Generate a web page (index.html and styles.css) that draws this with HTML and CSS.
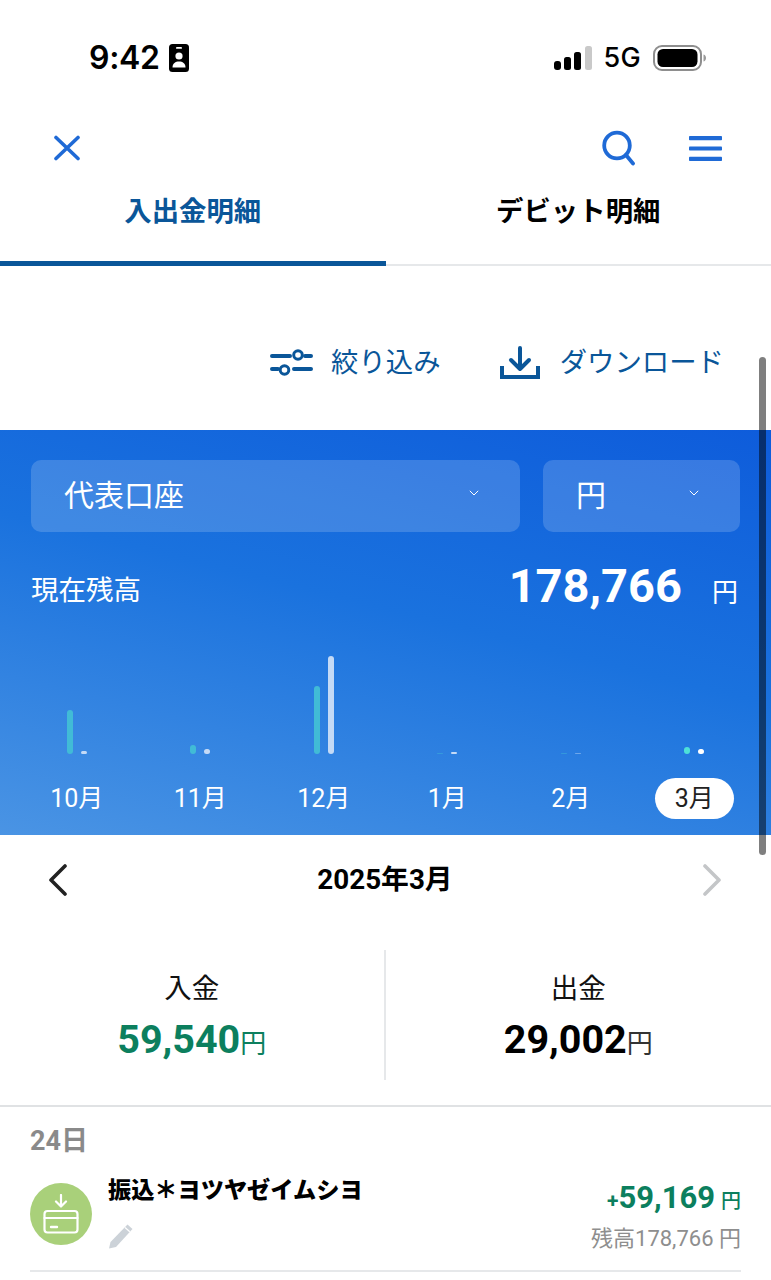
FILE: index.html
```html
<!DOCTYPE html>
<html lang="ja">
<head>
<meta charset="utf-8">
<title>入出金明細</title>
<link rel="stylesheet" href="styles.css">
</head>
<body>
<div class="page">
  <div class="status">
    <div class="status-left">
      <span class="time">9:42</span>
      <svg class="id-icon" width="22" height="30" viewBox="0 0 22 30"><rect x="1" y="1" width="20" height="28" rx="3.5" fill="#000"/><rect x="8" y="4" width="6" height="1.8" rx=".9" fill="#fff"/><circle cx="11" cy="13" r="3.6" fill="#fff"/><path d="M4.5 24.5c0-4.2 3-6 6.5-6s6.500 1.800 6.500 6z" fill="#fff"/></svg>
    </div>
    <div class="status-right">
      <svg width="38" height="24" viewBox="0 0 38 24"><rect x="0" y="15" width="7" height="9" rx="3" fill="#000"/><rect x="10" y="11" width="7" height="13" rx="2.500" fill="#000"/><rect x="20" y="6" width="7" height="18" rx="2.500" fill="#000"/><rect x="31" y="0" width="7" height="24" rx="2.500" fill="#c9c9c9"/></svg>
      <span class="net">5G</span>
      <svg width="54" height="28" viewBox="0 0 54 28"><rect x="1" y="2" width="47" height="24" rx="8" fill="none" stroke="#8e8e8e" stroke-width="2"/><rect x="4.500" y="5" width="40" height="18" rx="5.500" fill="#000"/><path d="M50.500 10.500c2 .6 2.500 2 2.500 3.500s-.5 2.900-2.500 3.500z" fill="#9a9a9a"/></svg>
    </div>
  </div>

  <header class="topbar">
    <svg width="28" height="26" viewBox="0 0 28 26" fill="none" stroke="#1f6ad6" stroke-width="3.600" stroke-linecap="round"><path d="M3 2.500l22 21M25 2.500L3 23.500"/></svg>
    <div class="topbar-right">
      <svg width="36" height="36" viewBox="0 0 36 36" fill="none" stroke="#1f6ad6" stroke-width="3.800" stroke-linecap="round"><circle cx="16" cy="15.500" r="12.800"/><path d="M25 25l7 8.500"/></svg>
      <svg class="menu" width="33" height="25" viewBox="0 0 33 25" fill="#1f6ad6"><rect y="0" width="33" height="4.200" rx=".8"/><rect y="10.400" width="33" height="4.200" rx=".8"/><rect y="20.800" width="33" height="4.200" rx=".8"/></svg>
    </div>
  </header>

  <nav class="tabs">
    <div class="tab tab-active"><span class="tab-label">入出金明細</span></div>
    <div class="tab"><span class="tab-label">デビット明細</span></div>
  </nav>

  <div class="actions">
    <div class="action">
      <svg width="43" height="30" viewBox="0 0 43 30" fill="none" stroke="#0a5699" stroke-width="4" stroke-linecap="round"><path d="M2 9h18M35 9h6M2 22h6M24 22h17"/><circle cx="28" cy="8" r="4.300" stroke-width="3"/><circle cx="14.500" cy="23" r="4.300" stroke-width="3"/></svg>
      <span>絞り込み</span>
    </div>
    <div class="action action-dl">
      <svg width="40" height="33" viewBox="0 0 40 33" fill="none" stroke="#0a5699" stroke-width="4" stroke-linecap="round" stroke-linejoin="round"><path d="M20 2v21M11 14l9 9 9-9"/><path d="M2 20v11h36V20" stroke-linecap="butt" stroke-linejoin="miter"/></svg>
      <span>ダウンロード</span>
    </div>
  </div>

  <section class="panel">
    <div class="selects">
      <div class="select select-main"><span>代表口座</span><svg class="chev" width="10" height="6" viewBox="0 0 10 6" fill="none" stroke="#fff" stroke-width="1"><path d="M.8.800L5 5l4.200-4.200"/></svg></div>
      <div class="select select-cur"><span>円</span><svg class="chev" width="10" height="6" viewBox="0 0 10 6" fill="none" stroke="#fff" stroke-width="1"><path d="M.8.800L5 5l4.200-4.200"/></svg></div>
    </div>
    <div class="balance">
      <span class="balance-label">現在残高</span>
      <div class="balance-value"><span class="balance-num">178,766</span><span class="balance-unit">円</span></div>
    </div>
    <div class="chart">
      <div class="col"><div class="bars"><i class="bar bar-in" style="height:44px"></i><i class="bar bar-out" style="height:3px"></i></div><div class="month">10月</div></div>
      <div class="col"><div class="bars"><i class="bar bar-in" style="height:9px"></i><i class="bar bar-out" style="height:5px"></i></div><div class="month">11月</div></div>
      <div class="col"><div class="bars"><i class="bar bar-in" style="height:68px"></i><i class="bar bar-out" style="height:98px"></i></div><div class="month">12月</div></div>
      <div class="col"><div class="bars"><i class="bar bar-in bar-faint" style="height:1px"></i><i class="bar bar-out" style="height:2px"></i></div><div class="month">1月</div></div>
      <div class="col"><div class="bars"><i class="bar bar-in bar-faint" style="height:1px"></i><i class="bar bar-out bar-faint" style="height:1px"></i></div><div class="month">2月</div></div>
      <div class="col"><div class="bars"><i class="bar bar-now-in" style="height:7px"></i><i class="bar bar-now-out" style="height:5px"></i></div><div class="month month-active">3月</div></div>
    </div>
  </section>

  <div class="monthbar">
    <svg width="20" height="32" viewBox="0 0 20 32" fill="none" stroke="#222" stroke-width="3.600" stroke-linecap="round" stroke-linejoin="round"><path d="M17 2L3 16l14 14"/></svg>
    <span class="monthbar-title">2025年3月</span>
    <svg width="20" height="32" viewBox="0 0 20 32" fill="none" stroke="#c4c6c8" stroke-width="3.600" stroke-linecap="round" stroke-linejoin="round"><path d="M3 2l14 14L3 30"/></svg>
  </div>

  <div class="summary">
    <div class="sum-col sum-left">
      <div class="sum-label">入金</div>
      <div class="sum-value sum-in"><b>59,540</b><span>円</span></div>
    </div>
    <div class="sum-col">
      <div class="sum-label">出金</div>
      <div class="sum-value"><b>29,002</b><span>円</span></div>
    </div>
  </div>

  <section class="list">
    <div class="day">24日</div>
    <div class="row">
      <div class="circle">
        <svg width="36" height="40" viewBox="0 0 36 40" fill="none" stroke="#fff" stroke-width="2.200" stroke-linecap="round" stroke-linejoin="round"><path d="M18 1v11M13 7.500l5 5 5-5"/><rect x="1.500" y="17" width="33" height="21.500" rx="3"/><path d="M1.500 24h33"/><path d="M8 33h6" stroke-width="2.400"/></svg>
      </div>
      <div class="row-main">
        <div class="row-title">振込＊ヨツヤゼイムシヨ</div>
        <svg class="pencil" width="26" height="26" viewBox="0 0 26 26"><path d="M19.500 1.500l5 4.500L8 24 1 25.500 2.500 19z" fill="#ccd2d8"/><path d="M17 4.500l4.800 4.300" stroke="#fff" stroke-width="1.200"/></svg>
      </div>
      <div class="row-amount">
        <div class="amount"><span class="plus">+</span><b>59,169</b><span class="amount-unit">円</span></div>
        <div class="after">残高178,766 円</div>
      </div>
    </div>
  </section>

  <div class="scrollbar"></div>
</div>
</body>
</html>
```
FILE: styles.css
```css
* { box-sizing: border-box; }
html, body { margin: 0; padding: 0; background: #fff; }
body { font-family: "Noto Sans CJK JP", "Noto Sans", sans-serif; color: #000; }
.page { position: relative; width: 771px; height: 1280px; overflow: hidden; background: #fff; }

.status { height: 100px; padding: 15px 64px 0 89px; display: flex; justify-content: space-between; align-items: center; }
.status-left { display: flex; align-items: center; gap: 8px; }
.time { font-family: Inter, sans-serif; font-weight: 600; font-size: 32px; line-height: 40px; letter-spacing: -.3px; }
.status-right { display: flex; align-items: center; gap: 12px; }
.net { font-family: Inter, sans-serif; font-weight: 500; font-size: 27px; line-height: 30px; letter-spacing: .3px; }

.topbar { height: 93px; padding: 3px 49px 0 53px; display: flex; justify-content: space-between; align-items: center; }
.topbar-right { display: flex; align-items: center; gap: 52px; }

.tabs { height: 73px; display: flex; border-bottom: 2px solid #e6e8ea; }
.tab { flex: 1; height: 73px; text-align: center; font-size: 27.4px; font-weight: 700; color: #000; border-bottom: 5px solid transparent; }
.tab-label { display: block; line-height: 32px; }
.tab-active { color: #0a5699; border-bottom-color: #0a5699; }

.actions { height: 164px; padding: 24px 47px 0 0; display: flex; justify-content: flex-end; align-items: center; gap: 59px; }
.action { display: flex; align-items: center; gap: 18px; font-size: 27.4px; color: #0a5699; }
.action-dl { gap: 20px; }
.action span { line-height: 36px; }
.action svg { margin-top: 4px; }

.panel { height: 405px; padding: 30px 15px 0; background: linear-gradient(194deg, #0e5cdb 0%, #1a72de 46%, #4a94e4 100%); color: #fff; }
.selects { display: flex; gap: 23px; padding: 0 16px; height: 72px; }
.select { height: 72px; border-radius: 10px; background: rgba(255,255,255,.17); display: flex; align-items: center; justify-content: space-between; font-size: 30px; padding: 0 41px 0 33px; }
.select span { margin-bottom: 6px; }
.select-main { flex: 1; }
.select-cur { width: 197px; }
.chev { margin-top: -6px; }
.balance { display: flex; justify-content: space-between; align-items: center; padding: 0 18px 0 16px; height: 80px; margin-top: 14px; }
.balance-label { font-size: 27.5px; line-height: 36px; margin-top: 4px; }
.balance-value { display: flex; align-items: baseline; gap: 30px; }
.balance-num { font-family: Roboto, sans-serif; font-weight: 700; font-size: 47px; line-height: 54px; }
.balance-unit { font-size: 26px; }

.chart { display: grid; grid-template-columns: repeat(6, 1fr); height: 209px; }
.col { display: flex; flex-direction: column; align-items: center; }
.bars { height: 128px; display: flex; align-items: flex-end; justify-content: center; gap: 8px; }
.bar { display: block; width: 6px; border-radius: 3px; }
.bar-in { background: #41bbd6; }
.bar-out { background: #c4daf6; }
.bar-faint { opacity: .45; }
.bar-now-in { background: #4de0d8; }
.bar-now-out { background: #fff; }
.month { margin-top: 24px; height: 41px; line-height: 41px; padding: 0 20px; border-radius: 21px; font-size: 25px; color: #fff; white-space: nowrap; font-family: Roboto, "Noto Sans CJK JP", sans-serif; }
.month-active { background: #fff; color: #222; }

.monthbar { height: 90px; padding: 0 49px 0 48px; display: flex; justify-content: space-between; align-items: center; }
.monthbar-title { font-family: Roboto, "Noto Sans CJK JP", sans-serif; font-weight: 700; font-size: 27.8px; margin-bottom: 6px; }

.summary { height: 130px; margin-top: 25px; display: grid; grid-template-columns: 1fr 1fr; }
.sum-col { text-align: center; padding-top: 17px; }
.sum-left { border-right: 2px solid #e6e8ea; }
.sum-label { font-size: 27.5px; line-height: 38px; color: #111; }
.sum-value { display: flex; justify-content: center; align-items: baseline; line-height: 52px; height: 52px; margin-top: 9px; }
.sum-value b { font-family: Roboto, sans-serif; font-weight: 700; font-size: 39.5px; }
.sum-value span { font-size: 26px; color: #333; }
.sum-in b { color: #0c7f5e; }
.sum-in span { color: #0c7f5e; }

.list { margin-top: 25px; border-top: 2px solid #e0e2e4; padding: 0 30px; }
.day { font-family: Roboto, "Noto Sans CJK JP", sans-serif; font-weight: 700; font-size: 27px; line-height: 32px; color: #8a8a8a; margin-top: 18px; }
.row { height: 115px; padding-top: 15px; display: flex; align-items: flex-start; border-bottom: 2px solid #e6e8ea; }
.circle { width: 62px; height: 62px; margin-top: 11px; border-radius: 50%; background: #a9d07a; display: flex; align-items: center; justify-content: center; flex: none; }
.row-main { flex: 1; padding: 0 0 0 16px; }
.row-title { font-size: 23.2px; font-weight: 900; line-height: 32px; }
.pencil { display: block; margin-top: 19px; }
.row-amount { text-align: right; padding-top: 7px; }
.amount { display: flex; justify-content: flex-end; align-items: baseline; color: #0c7f5e; line-height: 38px; }
.amount b { font-family: Roboto, sans-serif; font-weight: 700; font-size: 31px; }
.plus { font-family: Roboto, sans-serif; font-weight: 700; font-size: 21px; }
.amount-unit { font-size: 20px; font-weight: 500; margin-left: 6px; }
.after { font-family: Roboto, "Noto Sans CJK JP", sans-serif; font-size: 22px; line-height: 38px; color: #8e8e8e; }

.scrollbar { position: absolute; right: 5px; top: 357px; width: 7px; height: 498px; border-radius: 4px; background: rgba(0,0,0,.5); }
```
